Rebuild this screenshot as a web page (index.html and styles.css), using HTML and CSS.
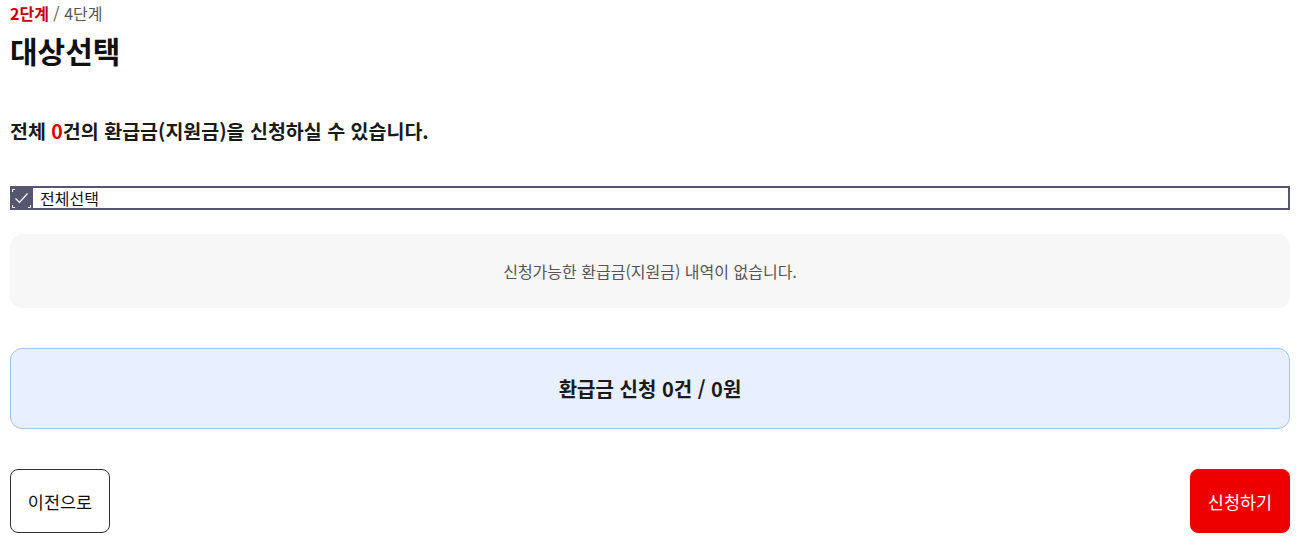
FILE: index.html
```html
<!DOCTYPE html>
<html lang="ko">
<head>
<meta charset="utf-8">
<link rel="stylesheet" href="styles.css">
</head>
<body>
<div class="page">
  <div class="step"><strong class="step-now">2단계</strong> / 4단계</div>
  <h1 class="title">대상선택</h1>
  <p class="summary">전체 <span class="red">0</span>건의 환급금(지원금)을 신청하실 수 있습니다.</p>
  <label class="check-all">
    <span class="check-box">
      <svg width="23" height="23" viewBox="0 0 23 23">
        <path d="M2.5 5V2.5H5M2.5 18V20.5H5M18 20.5H20.5V18" fill="none" stroke="#fff" stroke-width="1"/>
        <path d="M5.5 11.5L9.5 15.5L17.5 6.5" fill="none" stroke="#fff" stroke-width="1.2"/>
      </svg>
    </span>
    <span class="check-text">전체선택</span>
  </label>
  <div class="empty">신청가능한 환급금(지원금) 내역이 없습니다.</div>
  <div class="total">환급금 신청 0건 / 0원</div>
  <div class="actions">
    <button class="btn btn-prev" type="button">이전으로</button>
    <button class="btn btn-apply" type="button">신청하기</button>
  </div>
</div>
</body>
</html>
```

FILE: styles.css
```css
* { box-sizing: border-box; }
html, body { margin: 0; padding: 0; background: #fff; }
body {
  font-family: "Noto Sans CJK KR", "Noto Sans", sans-serif;
  color: #111;
}
.page {
  width: 1280px;
  margin-left: 10px;
  padding-top: 3px;
}
.step {
  font-size: 16px;
  line-height: 20px;
  color: #555;
}
.step-now { color: #c8000a; font-weight: 700; }
.title {
  margin: 9px 0 0;
  font-size: 30px;
  line-height: 36px;
  font-weight: 700;
  color: #111;
}
.summary {
  margin: 50px 0 0;
  font-size: 19.5px;
  line-height: 26px;
  font-weight: 700;
  color: #1a1a1a;
}
.red { color: #e00000; }
.check-all {
  margin-top: 42px;
  display: flex;
  align-items: center;
  height: 24px;
  border: 2px solid #565670;
}
.check-box {
  width: 23px;
  height: 23px;
  margin-left: -2px;
  margin-top: 1px;
  background: #565670;
  display: flex;
}
.check-text {
  margin-left: 7px;
  font-size: 16px;
  line-height: 20px;
  color: #111;
}
.empty {
  margin-top: 24px;
  height: 74px;
  background: #f7f7f7;
  border-radius: 12px;
  display: flex;
  align-items: center;
  justify-content: center;
  font-size: 16px;
  color: #555;
}
.total {
  margin-top: 40px;
  height: 81px;
  background: #e8effe;
  border: 1px solid #a7c2f7;
  border-radius: 12px;
  display: flex;
  align-items: center;
  justify-content: center;
  font-size: 20px;
  font-weight: 700;
  color: #1a1a1a;
}
.actions {
  margin-top: 40px;
  display: flex;
  justify-content: space-between;
}
.btn {
  width: 100px;
  height: 64px;
  border-radius: 8px;
  font-family: inherit;
  font-size: 17.5px;
  padding: 0;
  cursor: pointer;
}
.btn-prev {
  background: #fff;
  border: 1px solid #333;
  color: #111;
}
.btn-apply {
  background: #ee0000;
  border: 1px solid #ee0000;
  color: #fff;
}
```
